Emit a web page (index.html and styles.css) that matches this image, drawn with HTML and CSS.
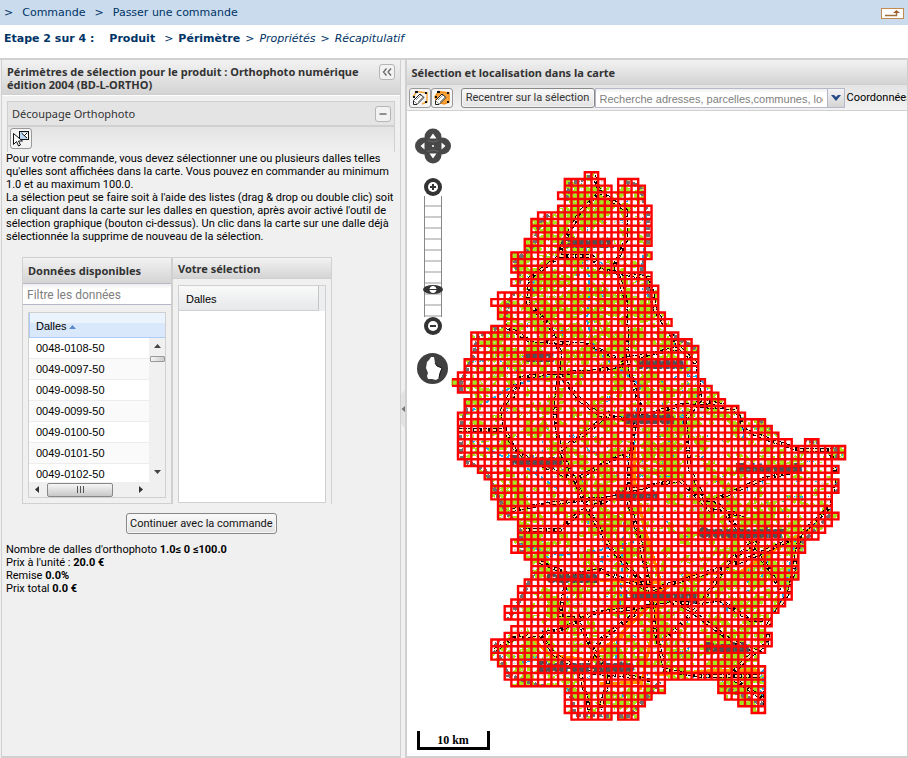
FILE: index.html
```html
<!DOCTYPE html>
<html lang="fr">
<head>
<meta charset="utf-8">
<title>Passer une commande</title>
<link rel="stylesheet" href="styles.css">
</head>
<body>
<header class="crumbs">
  <nav class="crumb-list"><span>&gt;</span><a href="#">Commande</a><span>&gt;</span><a href="#">Passer une commande</a></nav>
  <button class="up" aria-label="Remonter">
    <svg width="23" height="11" viewBox="0 0 23 11"><rect x="0.5" y="0.5" width="22" height="10" fill="#fff" stroke="#c48a50"/><path d="M4 7.500h11.500V4" fill="none" stroke="#a0703c" stroke-width="1.500"/><path d="M12 5l3.500-3L19 5z" fill="#a0602c"/></svg>
  </button>
</header>
<div class="steps"><b class="step-no">Etape 2 sur 4 :</b><b class="done">Produit</b><span>&gt;</span><b>Périmètre</b><span>&gt;</span><i>Propriétés</i><span>&gt;</span><i>Récapitulatif</i></div>
<main class="work">
  <section class="panel left">
    <div class="panel-head">
      <h2>Périmètres de sélection pour le produit : Orthophoto numérique édition 2004 (BD-L-ORTHO)</h2>
      <button class="tool" aria-label="Réduire"><svg width="14" height="14" viewBox="0 0 14 14"><path d="M6.500 3.500L3.500 7l3 3.500M11 3.500L8 7l3 3.500" fill="none" stroke="#666" stroke-width="1.300"/></svg></button>
    </div>
    <div class="left-body">
      <section class="sub">
        <div class="sub-head"><h3>Découpage Orthophoto</h3><button class="tool" aria-label="Replier"><svg width="14" height="14" viewBox="0 0 14 14"><path d="M3.500 7h7" stroke="#666" stroke-width="1.400"/></svg></button></div>
        <div class="sub-bar"><button class="icon-btn" aria-label="Sélection graphique"><svg width="18" height="18" viewBox="0 0 18 18"><rect x="7.500" y="1.500" width="9" height="8" fill="#b9d8fa" stroke="#111"/><path d="M10 3h6v6z" fill="#fff"/><path d="M9.500 3l5.500 5M15 3l-3 3" stroke="#111" fill="none"/><path d="M1.500 3.500v11l3-3 2 4.500 2-1-2-4h4z" fill="#fff" stroke="#111"/></svg></button></div>
      </section>
      <p class="intro">Pour votre commande, vous devez sélectionner une ou plusieurs dalles telles qu'elles sont affichées dans la carte. Vous pouvez en commander au minimum 1.0 et au maximum 100.0.<br>La sélection peut se faire soit à l'aide des listes (drag &amp; drop ou double clic) soit en cliquant dans la carte sur les dalles en question, après avoir activé l'outil de sélection graphique (bouton ci-dessus). Un clic dans la carte sur une dalle déjà sélectionnée la supprime de nouveau de la sélection.</p>
      <div class="lists">
        <section class="list avail">
          <h3 class="list-head">Données disponibles</h3>
          <input class="filter" type="text" placeholder="Filtre les données" aria-label="Filtre les données">
          <div class="grid">
            <div class="rows">
              <table>
                <thead><tr><th>Dalles <svg width="7" height="4" viewBox="0 0 7 4"><path d="M3.500 0L7 4H0z" fill="#5b8bcb"/></svg></th></tr></thead>
                <tbody>
                  <tr><td>0048-0108-50</td></tr><tr><td>0049-0097-50</td></tr><tr><td>0049-0098-50</td></tr><tr><td>0049-0099-50</td></tr><tr><td>0049-0100-50</td></tr><tr><td>0049-0101-50</td></tr><tr><td>0049-0102-50</td></tr>
                </tbody>
              </table>
            </div>
            <div class="vbar"><svg width="7" height="4" viewBox="0 0 7 4"><path d="M3.500 0L7 4H0z" fill="#444"/></svg><span class="vthumb"></span><svg class="down" width="7" height="4" viewBox="0 0 7 4"><path d="M3.500 4L7 0H0z" fill="#444"/></svg></div>
            <div class="hbar"><svg width="4" height="7" viewBox="0 0 4 7"><path d="M0 3.500L4 0v7z" fill="#333"/></svg><span class="hthumb"><i></i><i></i><i></i></span><svg class="right-arrow" width="4" height="7" viewBox="0 0 4 7"><path d="M4 3.500L0 0v7z" fill="#333"/></svg></div>
          </div>
        </section>
        <section class="list chosen">
          <h3 class="list-head">Votre sélection</h3>
          <div class="grid"><table><thead><tr><th>Dalles</th></tr></thead></table></div>
        </section>
      </div>
      <button class="btn go">Continuer avec la commande</button>
      <div class="totals">Nombre de dalles d'orthophoto <b>1.0≤ 0 ≤100.0</b><br>Prix à l'unité : <b>20.0 €</b><br>Remise <b>0.0%</b><br>Prix total <b>0.0 €</b></div>
    </div>
  </section>
  <div class="split"><svg width="4" height="38" viewBox="0 0 4 38"><path d="M4 0L0 4v30l4 4z" fill="#e2e2e2"/><path d="M0.500 19L4 16v6z" fill="#777"/></svg></div>
  <section class="panel right">
    <div class="panel-head"><h2>Sélection et localisation dans la carte</h2></div>
    <div class="map-bar">
      <button class="icon-btn" aria-label="Dessiner un contour"><svg width="18" height="18" viewBox="0 0 18 18"><path d="M2 8L5.500 2.500 16 4v9l-5 2" fill="none" stroke="#f5a63c" stroke-width="1.500"/><path d="M4 2h3v2H4zM14 3h2v2h-2zM14 12h2v2h-2zM2 7h2v2H2z" fill="#111"/><path d="M2.500 15.500v-4L9 5l4 3.500L6 15.500z" fill="#fff" stroke="#222"/><path d="M5 11l5-5M7 13l5-5M3 12l3 3" stroke="#777" stroke-width="0.800"/></svg></button>
      <button class="icon-btn" aria-label="Dessiner une surface"><svg width="18" height="18" viewBox="0 0 18 18"><path d="M2 8L5.500 2.500 16 4v9l-5 2-7-2z" fill="#f9a43a" stroke="#f08c18" stroke-width="1.500"/><path d="M4 2h3v2H4zM14 3h2v2h-2zM14 12h2v2h-2zM2 7h2v2H2z" fill="#111"/><path d="M2.500 15.500v-4L9 5l4 3.500L6 15.500z" fill="#fff" stroke="#222"/><path d="M5 11l5-5M7 13l5-5M3 12l3 3" stroke="#777" stroke-width="0.800"/></svg></button>
      <button class="btn recenter">Recentrer sur la sélection</button>
      <div class="combo"><input type="text" placeholder="Recherche adresses, parcelles,communes, localités" aria-label="Recherche"><button aria-label="Ouvrir la liste"><svg width="10" height="6" viewBox="0 0 10 6"><path d="M0 0h3l2 2 2-2h3L5 6z" fill="#264a86"/></svg></button></div>
      <span class="coord">Coordonnées</span>
    </div>
    <div class="map">
      <svg class="carte" id="carte" role="img" aria-label="Carte des dalles"></svg>
      <div class="controls">
        <button class="ctl" aria-label="Déplacer"><svg width="36" height="36" viewBox="0 0 36 36"><g fill="#484848"><circle cx="18" cy="9" r="8.500"/><circle cx="18" cy="27" r="8.500"/><ellipse cx="9" cy="18" rx="9" ry="8.500"/><ellipse cx="27" cy="18" rx="9" ry="8.500"/></g><g fill="#fff"><path d="M18 5.500l3.500 5h-7zM18 30.500l3.500-5h-7zM5.500 18l4-3.500v7zM30.500 18l-4-3.500v7z"/><circle cx="18" cy="18" r="1"/></g><g fill="none" stroke="#666"><path d="M12.500 12.500q5.500 3 11 0M12.500 23.500q5.500-3 11 0"/></g></svg></button>
        <div class="zoom">
          <button class="ctl" aria-label="Zoom avant"><svg width="18" height="18" viewBox="0 0 18 18"><circle cx="9" cy="9" r="9" fill="#333"/><circle cx="9" cy="9" r="5" fill="#fff"/><path d="M6 9h6M9 6v6" stroke="#333" stroke-width="2"/></svg></button>
          <input type="range" min="0" max="11" step="0.1" value="2.3" aria-label="Niveau de zoom">
          <button class="ctl" aria-label="Zoom arrière"><svg width="18" height="18" viewBox="0 0 18 18"><circle cx="9" cy="9" r="9" fill="#333"/><circle cx="9" cy="9" r="5" fill="#fff"/><path d="M6 9h6" stroke="#333" stroke-width="2"/></svg></button>
        </div>
        <button class="ctl" aria-label="Vue d'ensemble"><svg width="31" height="31" viewBox="0 0 31 31"><circle cx="15.500" cy="15.500" r="15.500" fill="#404040"/><path d="M14 4l3 0 1 6 2 3 5 2-2 5-1 5-3 2-4-1-4 0-1-3 1-3-2-5 1-6 2-2z" fill="#fff"/><path d="M18 10l2 3 5 2-2 5-1 5" fill="none" stroke="#111" stroke-width="1"/></svg></button>
      </div>
      <div class="scale">10 km</div>
    </div>
  </section>
</main>
<script src="map.js"></script>
</body>
</html>
```
FILE: map.js
```js
// Tile grid over the country: one entry per row, [first column, end column] pairs.
const rows = [
  [20,22],[17,23,25,28],[17,24,25,29],[16,29],[17,29],[16,30],[13,30],[12,30],[12,30],[12,30],
  [11,30],[11,29],[9,30],[9,29],[9,29],[10,30],[9,30],[10,31],[7,31],[6,31],
  [7,31],[7,32],[8,33],[6,32],[3,34],[3,36],[3,37],[3,37],[2,37],[2,37],
  [1,37],[0,38],[1,39],[3,40],[2,41],[2,43],[1,44],[1,47],[1,48],[1,49],
  [1,51,53,55],[1,59],[1,59],[2,57],[4,58],[5,57],[6,58],[6,58],[6,57],[7,57],
  [7,57],[7,58],[10,57],[10,56],[10,55],[9,53],[9,53],[11,52],[12,52],[12,52],
  [12,52],[11,51],[10,51],[10,51],[9,50],[8,49],[8,48],[10,48],[9,47],[8,48],
  [6,48],[6,47],[6,46],[7,46],[8,47],[8,47],[9,32,40,47],[17,32,40,47],[17,30,41,47],[17,29,43,47],
  [17,28,45,47],[18,24,25,28]
];
const X0 = 44.3, Y0 = 61.3, P = 6.675;
let area = "";
let cells = "";
rows.forEach((r, j) => {
  const y = Y0 + j * P;
  for (let k = 0; k < r.length; k += 2) {
    area += `M${X0 + r[k] * P} ${y}h${(r[k + 1] - r[k]) * P}v${P}h${-(r[k + 1] - r[k]) * P}z`;
    for (let i = r[k]; i < r[k + 1]; i++) cells += `M${X0 + i * P} ${y}h${P}v${P}h${-P}z`;
  }
});

// Smooth value noise for woodland and small ground patches.
const hash = (x, y, s) => {
  let n = Math.imul(x, 374761393) + Math.imul(y, 668265263) + Math.imul(s, 974634777);
  n = Math.imul(n ^ (n >>> 13), 1274126177);
  return ((n ^ (n >>> 16)) >>> 0) / 4294967296;
};
const noise = (x, y, size, s) => {
  const fx = x / size, fy = y / size, ix = Math.floor(fx), iy = Math.floor(fy);
  const u = fx - ix, v = fy - iy;
  const top = hash(ix, iy, s) * (1 - u) + hash(ix + 1, iy, s) * u;
  const low = hash(ix, iy + 1, s) * (1 - u) + hash(ix + 1, iy + 1, s) * u;
  return top * (1 - v) + low * v;
};
const patches = test => {
  let d = "";
  for (let y = 60; y < 610; y++) {
    let start = -1;
    for (let x = 44; x <= 440; x++) {
      const on = x < 440 && test(x, y);
      if (on && start < 0) start = x;
      if (!on && start >= 0) { d += `M${start} ${y}h${x - start}v1h${start - x}z`; start = -1; }
    }
  }
  return d;
};
const green = patches((x, y) => noise(x, y, 8, 1) * 0.45 + noise(x, y, 32, 2) * 0.2 + noise(x, y, 3, 3) * 0.35 > 0.52);
const grey = patches((x, y) => noise(x, y, 3, 5) > 0.8 && hash(x, y, 6) > 0.3);
const blue = patches((x, y) => noise(x, y, 5, 8) > 0.88 && hash(x, y, 9) > 0.4);

// Polylines are in page coordinates; the group below shifts them to the map.
const line = pts => `<polyline points="${pts}"/>`;
const border = ["592,176 570,184 566,200 540,222 534,245 515,262 520,280 508,305 504,325 478,336 474,355 460,385 466,410 460,430 462,460 485,470 505,510 520,530 522,555 533,575 520,600 508,620 495,648 508,675 540,686 570,690 575,715 630,716 660,682",
  "625,182 640,186 648,215 648,245 642,270 655,310 672,335 698,350 702,375 740,405 780,435 835,446 840,470 835,510 800,545 790,590 768,625 765,705 725,688"].map(line).join("");
const river = ["646,215 645,245 641,270", "585,240 590,290 587,320 595,350 640,385 636,420 632,460 626,500 622,560 620,610 615,670",
  "464,415 490,400 515,385 560,372", "672,335 680,360 700,380 738,405 745,440", "838,450 834,490 830,510 795,540 785,590 766,640 762,700", "470,440 530,470 560,490", "520,545 560,555 600,550 640,540"].map(line).join("");
const roads = ["594,176 600,192 580,212 562,245 560,256 530,278 528,303 550,326 560,352 558,380 555,415 560,450 575,480 588,510 612,550 650,590",
  "600,192 626,210 626,240 615,265 626,300 627,350 632,380 640,405 634,430 629,470 628,500 640,540 650,590",
  "560,256 592,256 600,270 650,278 655,310 680,348 698,365 700,400 735,408 745,430 770,440 800,450 830,450 835,470 832,505 800,535 790,590 768,625 765,705",
  "504,325 528,340 590,345 620,360 680,348", "515,400 520,378 550,373 590,372 625,365", "458,430 505,430 515,450 530,460 575,480 610,460 628,455",
  "515,385 502,410 505,430", "560,375 580,400 600,415 630,420 680,405 735,408", "560,450 590,430 610,412", "512,510 540,505 580,500 612,498 645,490",
  "523,530 560,530 580,512 630,490 680,480 710,510 745,515", "700,400 685,420 690,470 705,500 715,500 760,480 800,470",
  "540,562 570,575 600,570 650,590 700,575 745,560 790,540", "565,587 560,615 580,615 650,606", "512,635 540,635 555,655 585,672 620,675 650,680",
  "495,650 510,640 560,630 600,610", "575,615 590,645 610,675 600,710", "650,590 690,610 730,640 765,655", "650,590 655,630 665,670 700,676 760,676",
  "585,672 600,640 640,610", "665,640 700,605 730,560 760,540", "650,606 720,600 750,620 765,620", "715,500 740,532 770,570 780,590", "730,676 745,660 765,645", "735,680 765,700", "580,672 590,712"].map(line).join("");
const motorway = ["635,445 634,480 645,530 660,580 655,620 640,690", "650,597 690,575 740,572 790,540 810,530", "600,580 660,583", "655,600 620,635 590,660 550,655 530,636", "655,675 720,670 760,670", "600,684 640,682", "640,600 620,640"].map(line).join("");
const towns = [["Clervaux",587,247],["Wiltz",539,361],["Vianden",660,368],["Diekirch",650,423],["Redange",536,465],["Mersch",637,500],["Echternach",769,473],["Grevenmacher",741,537],["Capellen",572,582],["Luxembourg",660,600],["Remich",727,652],["Esch-sur-Alzette",586,671]]
  .map(t => `<text x="${t[1]}" y="${t[2]}">${t[0]}</text>`).join("");

document.getElementById("carte").innerHTML = `
<defs><clipPath id="land"><path d="${area}"/></clipPath><clipPath id="sheet"><rect x="45" y="0" width="600" height="900"/></clipPath></defs>
<g clip-path="url(#land)">
  <path d="${green}" class="wood"/><path d="${grey}" class="ground"/><path d="${blue}" class="water"/>
  <g transform="translate(-407 -111)" fill="none" shape-rendering="crispEdges">
    <g class="border">${border}</g><g class="river">${river}</g>
    <g class="motorway">${motorway}</g><g class="road">${roads}</g><g class="road-fill">${roads}</g>
    <g class="town">${towns}</g>
  </g>
</g>
<g clip-path="url(#sheet)"><path d="${cells}" class="tile"/></g>`;
```
FILE: styles.css
```css
* { box-sizing: border-box; }
body { margin: 0; height: 100vh; display: flex; flex-direction: column; overflow: hidden; background: #fff; color: #000; font: 11px/13px Roboto, sans-serif; }
h2, h3, p { margin: 0; font-size: 11px; }
h2, .list-head { font-family: "Noto Sans", sans-serif; }
button, input { font: inherit; margin: 0; padding: 0; }
button { cursor: pointer; }
svg { display: block; }
.crumbs { height: 25px; flex: none; display: flex; align-items: center; justify-content: space-between; padding: 1px 4px 0; background: #c9dbec; font: 11px/14px "DejaVu Sans", sans-serif; color: #003366; }
.crumb-list { display: flex; gap: 9px; }
.crumb-list a { color: inherit; text-decoration: none; }
.up { border: 0; background: none; }
.steps { flex: none; height: 33px; display: flex; gap: 5px; padding: 7px 4px; font: 11px/14px "DejaVu Sans", sans-serif; color: #003366; }
.step-no { margin-right: 10px; }
.done { margin-right: 4px; }
.work { flex: 1; min-height: 0; display: flex; background: #f0f0f0; border-top: 2px solid #d0d0d0; }
.panel { display: flex; flex-direction: column; border: 1px solid #d0d0d0; border-width: 0 1px 2px; }
.left { flex: 0 0 44%; margin-left: 1px; }
.right { flex: 1; min-width: 0; border-left-width: 2px; background: #fff; }
.panel-head { display: flex; justify-content: space-between; gap: 8px; padding: 4px 5px; background: linear-gradient(#f2f2f2, #d4d4d4); border-bottom: 1px solid #d0d0d0; color: #333; }
.panel-head h2 { line-height: 13px; padding: 1px 0; }
.left .panel-head { min-height: 35px; padding-bottom: 2px; }
.right .panel-head { min-height: 25px; padding-top: 5px; }
.tool { flex: none; width: 16px; height: 16px; border: 1px solid #b5b5b5; border-radius: 3px; background: #f2f2f2; }
.left-body { padding: 5px 5px 0 4px; border-top: 1px solid #fff; flex: 1; }
.sub { border: 1px solid #d0d0d0; border-bottom: 0; background: #e9e9e9; margin-left: 1px; }
.sub-head { height: 25px; display: flex; align-items: center; justify-content: space-between; padding: 0 3px 0 4px; background: #e4e4e4; border-bottom: 2px solid #d0d0d0; color: #333; }
.sub-head h3 { font: 11px/13px "Noto Sans", sans-serif; }
.sub-bar { padding: 1px 2px; background: linear-gradient(#e4e4e4, #f0f0f0); height: 25px; }
.icon-btn { width: 22px; height: 21px; border: 1px solid #999; border-radius: 3px; background: #f4f4f4; display: flex; align-items: center; justify-content: center; }
.intro { line-height: 13px; }
.lists { display: flex; align-items: stretch; margin: 14px 0 9px 16px; height: 247px; }
.list { border: 1px solid #d0d0d0; display: flex; flex-direction: column; }
.avail { width: 150px; }
.chosen { width: 160px; border-bottom: 0; }
.list-head { height: 25px; line-height: 25px; padding: 0 5px; background: linear-gradient(#f2f2f2, #d4d4d4); color: #333; }
.chosen .list-head { height: 21px; line-height: 21px; border-bottom: 1px solid #d0d0d0; }
.filter { height: 22px; border: 1px solid #b5b8c8; border-width: 1px 0; padding: 2px 4px 0; font-size: 12px; background: linear-gradient(#eee, #fff 5px); }
.filter::placeholder, .combo input::placeholder { color: #808080; opacity: 1; }
.grid { border: 1px solid #d0d0d0; background: #fff; font: 11px/13px "Liberation Sans", sans-serif; overflow: hidden; }
.avail .grid { margin: 7px 5px 5px; flex: 1; display: grid; grid-template-columns: 1fr 16px; grid-template-rows: 1fr 15px; }
.chosen .grid { margin: 6px 5px 1px; flex: 1; }
.rows { grid-column: 1 / 3; grid-row: 1; overflow: hidden; height: 169px; }
table { width: 100%; border-collapse: separate; border-spacing: 0; }
th { height: 25px; padding: 3px 6px 0 7px; text-align: left; font-weight: 400; background: linear-gradient(#f9f9f9, #e6e8ea); border-bottom: 1px solid #d0d0d0; }
.chosen table { border-right: 6px solid #eceeef; }
.chosen th { border-right: 1px solid #c5c5c5; }
.avail th { background: linear-gradient(#ebf3fd 40%, #d9e8fb 41%); border-left: 1px solid #aaccf6; border-bottom-color: #aaccf6; padding-left: 6px; }
th svg { display: inline-block; margin: 0 2px 1px -1px; }
td { height: 21px; padding: 1px 7px 0; border-bottom: 1px solid #ededed; }
tr:nth-child(even) td { background: #fafafa; }
.vbar { grid-column: 2; grid-row: 1; margin-top: 25px; background: #f0f0f0; display: flex; flex-direction: column; align-items: center; padding: 6px 0 8px; z-index: 1; }
.vthumb { width: 15px; height: 6px; margin-top: 8px; border: 1px solid #999; border-radius: 1px; background: linear-gradient(90deg, #f4f4f4, #ccc); }
.down { margin-top: auto; }
.hbar { grid-column: 1 / 3; background: #f0f0f0; display: flex; align-items: center; padding: 0 22px 0 6px; }
.hthumb { width: 66px; height: 14px; margin-left: 8px; border: 1px solid #888; border-radius: 2px; background: linear-gradient(#f6f6f6, #c8c8c8); display: flex; justify-content: center; align-items: center; gap: 2px; }
.hthumb i { width: 1px; height: 7px; background: #555; }
.right-arrow { margin-left: auto; }
.btn { border: 1px solid #888; border-radius: 3px; background: linear-gradient(#fafafa, #e2e2e2); color: #111; white-space: nowrap; box-shadow: inset 0 0 0 1px #f6f6f6; padding: 0 3px; flex: none; }
.go { display: block; height: 21px; min-width: 150px; margin: 0 0 9px 120px; }
.recenter { height: 20px; min-width: 134px; margin: 0 0 0 8px; color: #333; }
.split { flex: none; width: 4px; display: flex; align-items: center; background: #f0f0f0; }
.map-bar { height: 26px; display: flex; align-items: center; background: linear-gradient(#e4e4e4, #f2f2f2); border-bottom: 1px solid #d0d0d0; padding: 0 2px; overflow: hidden; white-space: nowrap; }
.map-bar .icon-btn { flex: none; height: 20px; }
.coord { font-family: Roboto, sans-serif; }
.combo { flex: 0 0 250px; height: 20px; display: flex; border: 1px solid #b5b8c8; margin-right: 2px; }
.combo input { flex: 1; min-width: 0; border: 0; padding: 2px 4px 0; background: linear-gradient(#eee, #fff 4px); font: 11px/14px "Liberation Sans", sans-serif; text-overflow: clip; }
.combo button { width: 17px; border: 0; border-left: 1px solid #b5b8c8; background: linear-gradient(#f4f4f4, #d4d4d4); display: flex; align-items: center; justify-content: center; }
.map { flex: 1; position: relative; overflow: hidden; min-height: 0; }
.carte { width: 100%; height: 100%; }
.wood { fill: #a4e420; }
.ground { fill: #ddd; }
.water { fill: #18b4f0; }
.border { stroke: #707070; stroke-width: 4; stroke-dasharray: 5 2; }
.river { stroke: #18b4f0; stroke-width: 2; stroke-dasharray: 5 3; }
.road { stroke: #000; stroke-width: 4; stroke-dasharray: 4 1; }
.road-fill { stroke: #ffe4b0; stroke-width: 2; stroke-dasharray: 6 2; }
.motorway { stroke: #ff9c00; stroke-width: 3; }
.town { fill: #505050; stroke: #505050; stroke-width: 2; font: bold 12px "Liberation Sans", sans-serif; text-anchor: middle; }
.tile { fill: none; stroke: #f00; stroke-width: 2.4; }
.controls { position: absolute; left: 8px; top: 17px; width: 36px; display: flex; flex-direction: column; align-items: center; }
.ctl { border: 0; background: none; }
.zoom { display: flex; flex-direction: column; align-items: center; margin: 14px 0 18px; }
.zoom input { appearance: none; writing-mode: vertical-lr; direction: rtl; width: 20px; height: 121px; background: linear-gradient(90deg, transparent 1px, #888 1px 2px, transparent 2px 18px, #888 18px 19px, transparent 19px), repeating-linear-gradient(#fff 0 9px, #ccc 9px 11px) 2px 0 / 16px 100% no-repeat; }
.zoom input::-webkit-slider-thumb { appearance: none; width: 20px; height: 9px; border-radius: 50%; background: linear-gradient(#333, #333) center / 8px 1px no-repeat, radial-gradient(circle at center, #fff 0 3px, #333 4px); }
.scale { position: absolute; left: 10px; bottom: 6px; width: 73px; height: 19px; border: 3px solid #000; border-top: 0; text-align: center; font: bold 12px/18px "Liberation Serif", serif; }
```
